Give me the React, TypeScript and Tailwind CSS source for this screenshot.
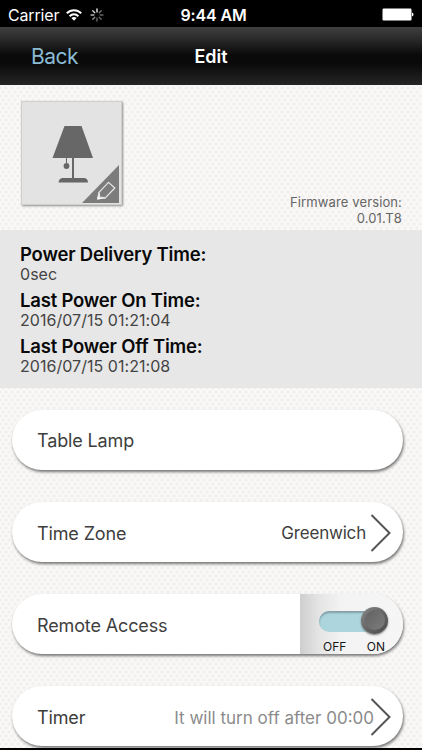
import type { ReactNode } from 'react';

function Wifi() {
  return (
    <svg width="16" height="12" viewBox="0 0 16 12" fill="none" stroke="#fff" strokeWidth="2">
      <path d="M0.8 4.3C4.8 0.2 11.2 0.2 15.2 4.3" />
      <path d="M3.6 7.2C6.1 4.7 9.9 4.7 12.4 7.2" />
      <path d="M8 11.7L5.4 9.1C6.8 7.7 9.2 7.7 10.6 9.1Z" fill="#fff" stroke="none" />
    </svg>
  );
}

const spokes = [1, 0.45, 0.4, 0.4, 0.45, 0.55, 0.7, 0.85];

function Spinner() {
  return (
    <svg width="14" height="14" viewBox="-7 -7 14 14" stroke="#fff" strokeWidth="1.3" strokeLinecap="round">
      {spokes.map((o, i) => (
        <line key={i} x1="0" y1="-3.1" x2="0" y2="-6" opacity={o} transform={`rotate(${i * 45})`} />
      ))}
    </svg>
  );
}

function StatusBar() {
  return (
    <div className="grid h-[27px] grid-cols-[1fr_auto_1fr] items-center bg-black px-2 pt-[2px] text-white">
      <div className="flex items-center">
        <span className="w-[51px] whitespace-nowrap text-[16px] leading-5 tracking-[-0.15px]">Carrier</span>
        <span className="ml-[7px]"><Wifi /></span>
        <span className="ml-[8px]"><Spinner /></span>
      </div>
      <span className="pl-[5px] text-[16px] font-semibold leading-5 tracking-[-0.15px]">9:44 AM</span>
      <div className="flex items-center justify-end">
        <svg width="33" height="13" viewBox="0 0 33 13">
          <rect x="1.5" y="0.5" width="29" height="12" rx="1.2" fill="#fff" />
          <path d="M31 4.5C33 5.2 33 7.8 31 8.5Z" fill="#fff" />
        </svg>
      </div>
    </div>
  );
}

function Header() {
  return (
    <div className="grid h-[58px] grid-cols-[1fr_auto_1fr] items-center bg-[linear-gradient(180deg,#404040_0%,#252525_25%,#0a0a0a_48%,#0a0a0a_63%,#252525_100%)] pt-px">
      <span className="pl-[31px] text-[21px] tracking-[-0.5px] text-[#8abbd3]">Back</span>
      <span className="text-[18px] font-semibold text-white">Edit</span>
      <span />
    </div>
  );
}

function Lamp() {
  return (
    <div className="h-[104px] w-[101px] border border-[#d0cfce] bg-[#e3e3e3] shadow-[1px_1px_2px_#8b8b8b]">
      <svg width="99" height="102" viewBox="22 102 99 102">
        <g fill="#676767">
          <path d="M64.500 126H81.500L93 158H52.500Z" />
          <rect x="72" y="157" width="2" height="22" />
          <rect x="66" y="157" width="1" height="7" />
          <circle cx="66.500" cy="166" r="2.900" />
          <path d="M58.500 182.500C59 179 61 178 63 178H83.500C86 178 87.700 179 88 182.500Z" />
        </g>
        <path d="M119 165V203H82Z" fill="#7c7c7c" />
        <g fill="none" stroke="#e8e8e8" strokeWidth="1.2" strokeLinejoin="round">
          <path d="M97.700 198.800L99 192.400L108.500 182.400L114.800 188L105.300 197.900Z" />
          <path d="M99 192.400L99.700 197.200L105.300 197.900" />
        </g>
        <path d="M97.200 199.500L98 196L101 198.800Z" fill="#fff" />
      </svg>
    </div>
  );
}

function Stat({ label, value }: { label: string; value: string }) {
  return (
    <div className="h-[46px]">
      <div className="text-[18.500px] font-semibold leading-[23px] tracking-[-0.2px] text-[#090909]">{label}</div>
      <div className="text-[16px] leading-[17px] tracking-[0.040px] text-[#444]">{value}</div>
    </div>
  );
}

function Chevron() {
  return (
    <svg className="shrink-0" width="22" height="40" viewBox="0 0 22 40" fill="none" stroke="#555" strokeWidth="2">
      <path d="M1.500 2L19.500 20L1.500 38" />
    </svg>
  );
}

function Row({ label, children }: { label: string; children?: ReactNode }) {
  return (
    <div className="flex h-[60px] w-[391px] shrink-0 items-center justify-between overflow-hidden rounded-[30px] bg-white pl-[25px] text-[18px] text-[#3e3e3e] shadow-[1px_2px_3px_#777]">
      <span className={children ? 'pt-[2px] tracking-[-0.130px]' : 'tracking-[-0.130px]'}>{label}</span>
      {children}
    </div>
  );
}

function Toggle() {
  return (
    <div className="flex h-full w-[103px] flex-col bg-[linear-gradient(90deg,#cecece_0%,#e4e4e4_18%,#f3f3f3_40%,#f6f6f6_100%)] pl-[19px] pt-[17px]">
      <div className="flex h-[21px] w-[69px] items-center justify-end rounded-full bg-[#acd5de] shadow-[inset_0_2px_2px_#829fa6]">
        <div className="mb-[3px] flex size-[27px] shrink-0 items-center justify-center rounded-full bg-[linear-gradient(135deg,#858585,#484848)] shadow-[0_1px_2px_#777]">
          <div className="size-[20px] rounded-full bg-[linear-gradient(135deg,#626262,#7c7c7c)]" />
        </div>
      </div>
      <div className="mt-[7px] flex w-[66px] justify-between pl-1 text-[12px] leading-[15px] text-[#171717]">
        <span>OFF</span>
        <span>ON</span>
      </div>
    </div>
  );
}

export default function App() {
  return (
    <main className="flex h-[750px] w-[422px] flex-col overflow-hidden bg-[#f9f8f6] bg-[radial-gradient(circle,#f1efed_1px,transparent_2px),radial-gradient(circle,#f1efed_1px,transparent_2px)] bg-[length:6px_8px] bg-[position:0_0,3px_4px] font-['Inter',sans-serif]">
      <StatusBar />
      <Header />
      <section className="flex h-[145px] shrink-0 justify-between pl-[21px] pr-[20px] pt-4">
        <Lamp />
        <p className="pt-[94px] text-right text-[13px] leading-[15.500px] tracking-[0.12px] text-[#656565]">
          Firmware version:<br />0.01.T8
        </p>
      </section>
      <section className="h-[158px] shrink-0 bg-[#e7e7e7] pl-5 pt-[13px]">
        <Stat label="Power Delivery Time:" value="0sec" />
        <Stat label="Last Power On Time:" value="2016/07/15 01:21:04" />
        <Stat label="Last Power Off Time:" value="2016/07/15 01:21:08" />
      </section>
      <section className="flex h-[360px] shrink-0 flex-col gap-8 overflow-hidden pl-3 pt-[22px]">
        <Row label="Table Lamp" />
        <Row label="Time Zone">
          <div className="flex items-center gap-[4px] pr-[11px] pt-[2px]"><span className="pt-[2px] text-[17px] tracking-[-0.200px]">Greenwich</span><Chevron /></div>
        </Row>
        <Row label="Remote Access"><Toggle /></Row>
        <Row label="Timer">
          <div className="flex items-center pr-[11px] pt-[2px]"><span className="-mr-[4px] pt-[3px] text-[17px] text-[#8b8b8b]">It will turn off after 00:00</span><Chevron /></div>
        </Row>
      </section>
      <div className="h-0.5 shrink-0 bg-black" />
    </main>
  );
}
